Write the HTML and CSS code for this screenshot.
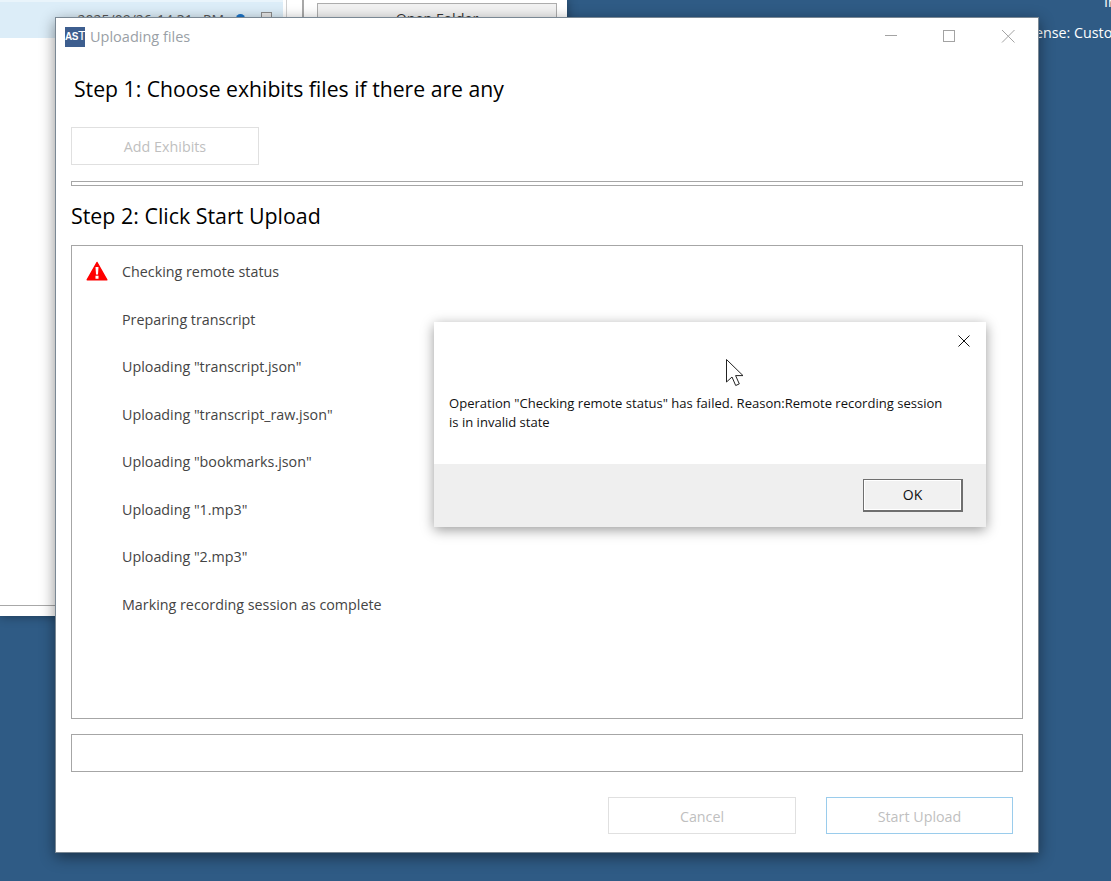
FILE: index.html
```html
<!DOCTYPE html>
<html lang="en">
<head>
<meta charset="utf-8">
<title>Uploading files</title>
<link rel="stylesheet" href="styles.css">
</head>
<body>
<div class="desktop">
  <div class="corner-text top">In</div>
  <div class="corner-text license">License: Custom</div>

  <section class="back-window">
    <div class="back-left">
      <div class="back-row">
        <span class="back-date">2025/09/26 14:31  PM</span>
        <span class="back-dot"></span>
        <span class="back-doc"></span>
      </div>
      <div class="back-rule"></div>
    </div>
    <div class="back-split"></div>
    <div class="back-right">
      <div class="back-btn">Open Folder</div>
    </div>
  </section>

  <section class="main-window">
    <header class="titlebar">
      <div class="app-icon">AS<span class="app-t">T</span></div>
      <div class="title-text">Uploading files</div>
      <div class="win-controls">
        <svg class="ctl" width="46" height="32" viewBox="0 0 46 32"><path d="M17 15.5h12" stroke="#a3a3a3" fill="none"/></svg>
        <svg class="ctl" width="46" height="32" viewBox="0 0 46 32"><rect x="16.500" y="10.500" width="11" height="11" stroke="#a3a3a3" fill="none"/></svg>
        <svg class="ctl" width="46" height="32" viewBox="0 0 46 32"><path d="M16 10l12.500 12.500M28.500 10L16 22.500" stroke="#a3a3a3" fill="none"/></svg>
      </div>
    </header>
    <div class="content">
      <h1 class="step-one">Step 1: Choose exhibits files if there are any</h1>
      <div class="btn wide">Add Exhibits</div>
      <div class="separator"></div>
      <h2 class="step-two">Step 2: Click Start Upload</h2>
      <div class="task-list">
        <div class="task">
          <svg class="warn" width="22" height="20" viewBox="0 0 22 20"><path d="M11 1.500L20.800 18.800H1.200z" fill="#f00" stroke="#f00" stroke-width="1.500" stroke-linejoin="round"/><path d="M9.500 6h3l-.5 7.500h-2zM9.500 14.800h3v3h-3z" fill="#fff"/></svg>
          <span>Checking remote status</span>
        </div>
        <div class="task"><span>Preparing transcript</span></div>
        <div class="task"><span>Uploading "transcript.json"</span></div>
        <div class="task"><span>Uploading "transcript_raw.json"</span></div>
        <div class="task"><span>Uploading "bookmarks.json"</span></div>
        <div class="task"><span>Uploading "1.mp3"</span></div>
        <div class="task"><span>Uploading "2.mp3"</span></div>
        <div class="task"><span>Marking recording session as complete</span></div>
      </div>
      <div class="progress"></div>
      <div class="actions">
        <div class="btn">Cancel</div>
        <div class="btn focus">Start Upload</div>
      </div>
    </div>
  </section>

  <section class="dialog">
    <div class="dialog-top">
      <svg class="dialog-close" width="12" height="12" viewBox="0 0 12 12"><path d="M.5.5l11 11M11.5.5l-11 11" stroke="#111" fill="none"/></svg>
      <p class="dialog-msg">Operation "Checking remote status" has failed. Reason:Remote recording session is in invalid state</p>
    </div>
    <div class="dialog-foot">
      <div class="ok-btn">OK</div>
    </div>
  </section>

  <svg class="cursor" width="20" height="29" viewBox="0 0 20 29"><path d="M1.500 1.500V24l5.500-5 3.700 8.500 3.600-1.600-3.700-8.300h7.400z" fill="#fff" stroke="#222" stroke-width="1"/></svg>
</div>
</body>
</html>
```
FILE: styles.css
```css
* { box-sizing: border-box; }
html, body { margin: 0; padding: 0; }
body { font-family: "Open Sans", "Noto Sans", sans-serif; }
.desktop { position: relative; width: 1111px; height: 881px; overflow: hidden; background: #2f5b85; }

.corner-text { position: absolute; color: #fff; font-size: 14.3px; line-height: 20px; white-space: nowrap; }
.corner-text.top { left: 1104px; top: -8px; }
.corner-text.license { left: 1017px; top: 23px; }

.back-window { position: absolute; left: 0; top: 0; width: 567px; height: 616px; background: #fff; display: flex; box-shadow: 0 0 10px rgba(0,0,0,.4); }
.back-left { width: 286px; display: flex; flex-direction: column; }
.back-row { height: 38px; width: 283px; background: #dcedf8; border-top: 2px solid #e9f4fb; display: flex; justify-content: flex-end; align-items: flex-start; gap: 12px; padding: 8px 11px 0 0; font-size: 14px; color: #555; }
.back-date { white-space: pre; line-height: 20px; word-spacing: 1.5px; }
.back-dot { width: 9px; height: 9px; border-radius: 50%; background: #1a73c8; margin-top: 4px; }
.back-doc { width: 11px; height: 14px; margin-left: 4px; border: 1px solid #8a8a8a; margin-top: 2px; background: #e6e6e6; }
.back-rule { margin-top: 567px; height: 1px; width: 56px; background: #a8a8a8; }
.back-split { width: 18px; border-left: 1px solid #d0d0d0; border-right: 2px solid #a8a8a8; }
.back-right { flex: 1; padding: 3px 10px 0 13px; }
.back-btn { height: 34px; border: 1px solid #adadad; background: #f2f2f2; text-align: center; font-size: 14.3px; line-height: 30px; color: #333; }

.main-window { position: absolute; left: 55px; top: 17px; width: 984px; height: 836px; background: #fff; border: 1px solid #7a8894; box-shadow: 0 4px 14px rgba(0,0,0,.45); display: flex; flex-direction: column; }
.titlebar { height: 36px; display: flex; align-items: center; padding-left: 9px; flex: none; }
.app-icon { width: 20px; height: 20px; margin-top: 1px; background: #3d5e8f; color: #fff; font-family: "Liberation Sans", sans-serif; font-size: 10px; font-weight: 700; line-height: 20px; text-align: center; letter-spacing: -.4px; }
.app-t { font-weight: 400; font-size: 13px; line-height: 16px; }
.title-text { margin-left: 5px; font-size: 14.5px; color: #9a9fa6; }
.win-controls { margin-left: auto; display: flex; margin-right: 6px; gap: 13px; }
.ctl { display: block; }

.content { flex: 1; display: flex; flex-direction: column; padding: 0 15px 0 15px; }
.step-one { margin: 19px 0 0 3px; font-size: 21.2px; font-weight: 400; line-height: 32px; color: #000; }
.step-two { margin: 14px 0 0; font-size: 21.4px; font-weight: 400; line-height: 32px; color: #000; }
.btn { width: 188px; height: 37px; border: 1px solid #e0e0e0; color: #bfbfbf; font-size: 14.3px; display: flex; align-items: center; justify-content: center; }
.btn.wide { margin-top: 22px; height: 38px; }
.btn.focus { width: 187px; border-color: #9accec; }
.separator { margin-top: 16px; height: 5px; border: 1px solid #a6a6a6; }
.task-list { margin-top: 13px; height: 474px; border: 1px solid #a6a6a6; padding-top: 2px; }
.task { height: 47.5px; position: relative; display: flex; align-items: center; padding-left: 50px; font-size: 14.3px; color: #444; }
.warn { position: absolute; left: 14px; top: 13px; }
.progress { margin-top: 15px; height: 38px; border: 1px solid #a6a6a6; }
.actions { margin-top: 25px; display: flex; justify-content: flex-end; gap: 30px; padding-right: 10px; }
.actions .btn { padding-top: 1px; }

.dialog { position: absolute; left: 434px; top: 322px; width: 552px; height: 205px; background: #fff; box-shadow: 0 3px 12px rgba(0,0,0,.4); display: flex; flex-direction: column; }
.dialog-top { position: relative; height: 142px; padding: 72px 40px 0 15px; }
.dialog-close { position: absolute; right: 16px; top: 13px; }
.dialog-msg { margin: 0; font-size: 13.05px; line-height: 19px; color: #111; }
.dialog-foot { flex: 1; background: #efefef; display: flex; justify-content: flex-end; align-items: flex-start; padding: 15px 23px 0 0; }
.ok-btn { width: 100px; height: 33px; padding-bottom: 2px; background: #f1f1f1; border: 1px solid #6f6f6f; border-right-width: 2px; border-bottom-width: 2px; box-shadow: inset 0 0 0 1px #fff; font-size: 14px; color: #111; display: flex; align-items: center; justify-content: center; }

.cursor { position: absolute; left: 725px; top: 358px; }
```
